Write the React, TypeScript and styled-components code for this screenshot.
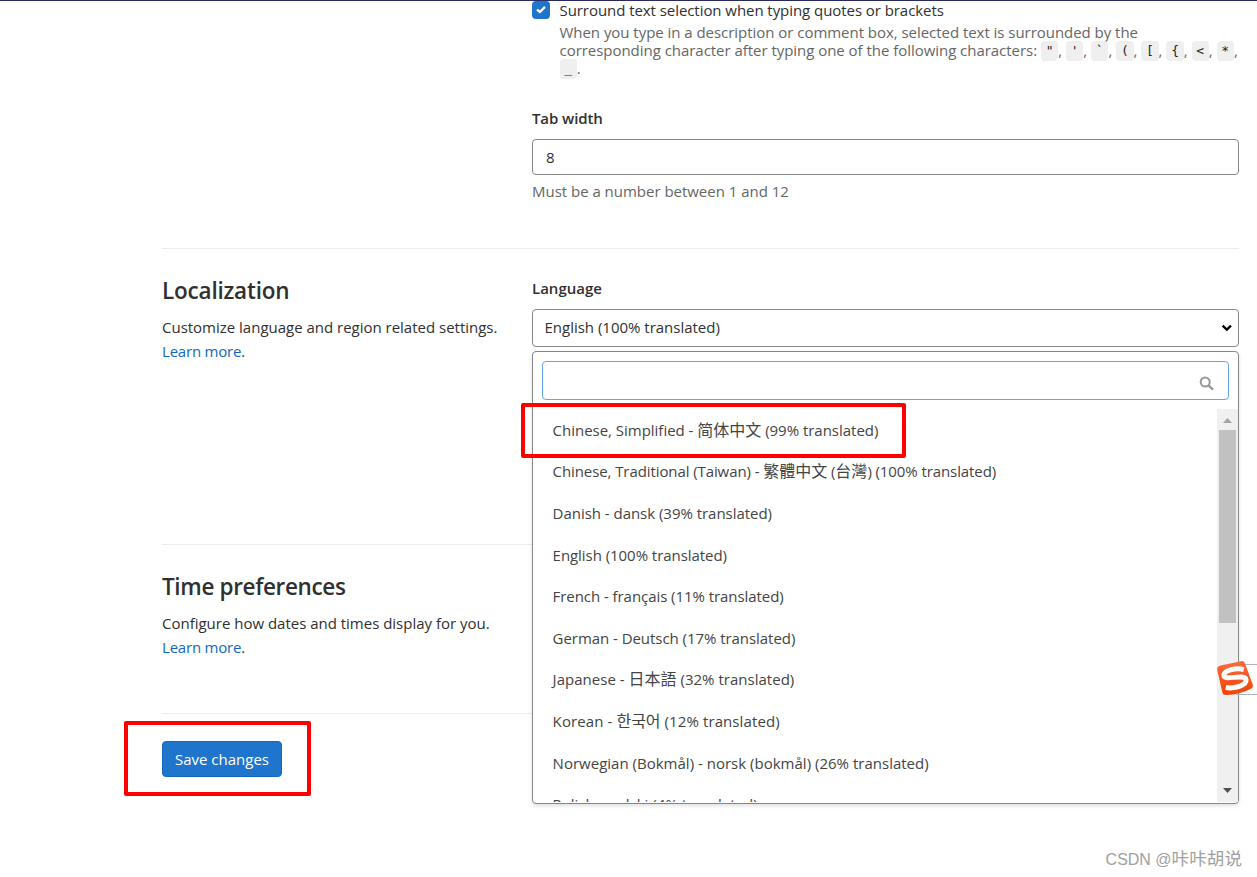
import React from "react";
import styled, { createGlobalStyle, css } from "styled-components";

const GlobalStyle = createGlobalStyle`
  * { box-sizing: border-box; }
  body {
    margin: 0;
    background: #fff;
    overflow: hidden;
    color: #303030;
    font-family: "Open Sans", "Noto Sans CJK SC", "Noto Sans CJK KR", sans-serif;
    font-size: 15px;
    line-height: 24px;
  }
`;

const Page = styled.div`
  position: relative;
  width: 1257px;
  height: 877px;
  overflow: hidden;
  border-top: 1px solid #292961;
`;

const Form = styled.form`
  margin: 0 18px 0 162px;
`;

const Section = styled.section<{ $height: number; $top?: number }>`
  display: grid;
  grid-template-columns: 370px 707px;
  height: ${(p) => p.$height}px;
  padding-top: ${(p) => p.$top ?? 0}px;
  border-bottom: 1px solid #ececec;
`;

const Heading = styled.h4<{ $spacing: number }>`
  margin: 0 0 9px;
  font-size: 22.5px;
  font-weight: 600;
  line-height: 30px;
  letter-spacing: ${(p) => p.$spacing}px;
`;

const Text = styled.p`
  margin: 0;
  white-space: nowrap;
  letter-spacing: -0.01px;
`;

const Link = styled.a`
  color: #1068bf;
  letter-spacing: -0.2px;
`;

const CheckRow = styled.div`
  display: flex;
  gap: 9.5px;
`;

const CheckBox = styled.span`
  display: flex;
  flex: none;
  align-items: center;
  justify-content: center;
  width: 18px;
  height: 18px;
  border-radius: 4px;
  background: #1f75cb;
`;

const CheckLabel = styled.label`
  display: block;
  height: 22px;
  line-height: 19px;
  letter-spacing: -0.06px;
  white-space: nowrap;
`;

const Help = styled.div`
  height: 55.5px;
  color: #666;
  line-height: 18.5px;
  white-space: nowrap;
`;

const HelpLine = styled.div<{ $height?: number }>`
  height: ${(p) => p.$height ?? 18.5}px;
  letter-spacing: -0.037px;
`;

const Hint = styled.div`
  padding-top: 2px;
  color: #666;
  letter-spacing: -0.02px;
`;

const Code = styled.code`
  display: inline-block;
  width: 17.3px;
  height: 20px;
  margin: -1px 0 1px;
  border-radius: 4px;
  background: #efefef;
  color: #1f1f1f;
  font: 13px/20px "DejaVu Sans Mono", monospace;
  letter-spacing: 0;
  text-align: center;
  vertical-align: middle;
`;

const Separator = styled.span`
  display: inline-block;
  width: 7.8px;
  letter-spacing: 0;
`;

const Label = styled.label<{ $top?: number; $spacing?: number }>`
  display: block;
  margin-top: ${(p) => p.$top ?? 0}px;
  font-weight: 600;
  letter-spacing: ${(p) => p.$spacing ?? 0}px;
`;

const field = css`
  display: flex;
  align-items: center;
  border: 1px solid #868686;
  border-radius: 4px;
  background: #fff;
`;

const TextField = styled.div`
  ${field}
  height: 36px;
  margin: 9px 0 2px;
  padding: 0 13px;
`;

const Select = styled.div`
  ${field}
  position: relative;
  justify-content: space-between;
  height: 38px;
  margin-top: 9px;
  padding: 0 6px 2px 11.5px;
`;

const Chevron = styled.svg`
  display: block;
  margin-top: 2px;
`;

const Dropdown = styled.div`
  position: absolute;
  top: 41px;
  left: -1px;
  z-index: 2;
  display: flex;
  flex-direction: column;
  width: 707px;
  height: 453px;
  padding: 9px 0 1px 9px;
  border: 1px solid #868686;
  border-radius: 4px;
  background: #fff;
  box-shadow: 0 2px 4px rgba(0, 0, 0, 0.12);
`;

const Search = styled.div`
  ${field}
  flex: none;
  justify-content: flex-end;
  width: 687px;
  height: 39px;
  padding: 7px 13px 0 0;
  border-color: #63a6e9;
`;

const Results = styled.div`
  display: flex;
  justify-content: space-between;
  height: 393px;
  margin-top: 9px;
  overflow: hidden;
`;

const Options = styled.ul`
  margin: 0;
  padding: 0 0 0 10.6px;
  list-style: none;
`;

const Option = styled.li<{ $spacing: number }>`
  height: 41.6px;
  padding-top: 8.8px;
  color: #444;
  white-space: nowrap;
  letter-spacing: ${(p) => p.$spacing}px;
`;

const Native = styled.span`
  font-size: 16px;
  line-height: 1;
  letter-spacing: 0;
`;

const Scrollbar = styled.div`
  display: flex;
  flex-direction: column;
  align-items: center;
  justify-content: space-between;
  width: 21px;
  padding: 9px 0;
  background: #f0f0f0;
`;

const Thumb = styled.div`
  width: 17px;
  height: 193px;
  margin: 7px 0 auto;
  background: #c1c1c1;
`;

const SaveButton = styled.button`
  display: block;
  width: 120px;
  height: 36px;
  margin-top: 27px;
  padding: 0 0 1px;
  border: 1px solid #1068bf;
  border-radius: 4px;
  background: #1f75cb;
  color: #fff;
  font: inherit;
  white-space: nowrap;
`;

const Highlight = styled.div<{ $x: number; $y: number; $w: number; $h: number }>`
  position: absolute;
  z-index: 3;
  left: ${(p) => p.$x}px;
  top: ${(p) => p.$y}px;
  width: ${(p) => p.$w}px;
  height: ${(p) => p.$h}px;
  border: 4px solid #fe0000;
  border-radius: 2px;
`;

const InputMethod = styled.div`
  position: absolute;
  z-index: 4;
  right: 0;
  top: 658px;
  width: 41px;
  height: 36px;
  svg { display: block; }
`;

const Watermark = styled.div`
  position: absolute;
  right: 15px;
  bottom: 5px;
  color: #a0a0a0;
  font: 16px/24px "Liberation Sans", "Noto Sans CJK SC", sans-serif;
  white-space: nowrap;
`;

const Author = styled.span`
  font-size: 17.6px;
  line-height: 1;
`;

const characters = ['"', "'", "`", "(", "[", "{", "<", "*"];

const languages: [string, number][] = [
  ["Chinese, Simplified - 简体中文 (99% translated)", -0.02],
  ["Chinese, Traditional (Taiwan) - 繁體中文 (台灣) (100% translated)", -0.09],
  ["Danish - dansk (39% translated)", -0.03],
  ["English (100% translated)", -0.05],
  ["French - français (11% translated)", -0.06],
  ["German - Deutsch (17% translated)", -0.05],
  ["Japanese - 日本語 (32% translated)", 0.02],
  ["Korean - 한국어 (12% translated)", 0.1],
  ["Norwegian (Bokmål) - norsk (bokmål) (26% translated)", 0.01],
  ["Polish - polski (4% translated)", 0.03],
];

function LanguageName({ name }: { name: string }) {
  return (
    <>
      {name.split(/([\u3000-\u9fff\uac00-\ud7af]+)/).map((part, i) =>
        i % 2 ? <Native key={i}>{part}</Native> : part
      )}
    </>
  );
}

export default function App() {
  return (
    <>
      <GlobalStyle />
      <Page>
        <Form>
          <Section $height={248}>
            <div />
            <div>
              <CheckRow>
                <CheckBox>
                  <svg width="10" height="8" viewBox="0 0 10 8" fill="none">
                    <path d="M1 3.600 3.900 6 9 .9" stroke="#fff" strokeWidth="2.300" />
                  </svg>
                </CheckBox>
                <div>
                  <CheckLabel>Surround text selection when typing quotes or brackets</CheckLabel>
                  <Help>
                    <HelpLine $height={17.6}>When you type in a description or comment box, selected text is surrounded by the</HelpLine>
                    <HelpLine>
                      corresponding character after typing one of the following characters:{" "}
                      {characters.map((c) => (
                        <React.Fragment key={c}>
                          <Code>{c}</Code>
                          <Separator>,</Separator>
                        </React.Fragment>
                      ))}
                    </HelpLine>
                    <HelpLine>
                      <Code>_</Code>.
                    </HelpLine>
                  </Help>
                </div>
              </CheckRow>
              <Label $top={27} $spacing={-0.1}>Tab width</Label>
              <TextField>8</TextField>
              <Hint>Must be a number between 1 and 12</Hint>
            </div>
          </Section>
          <Section $height={296} $top={27}>
            <div>
              <Heading $spacing={-0.2}>Localization</Heading>
              <Text>Customize language and region related settings.</Text>
              <Text><Link>Learn more</Link>.</Text>
            </div>
            <div>
              <Label>Language</Label>
              <Select>
                <Text>English (100% translated)</Text>
                <Chevron width="11" height="8" viewBox="0 0 11 8" fill="none">
                  <path d="M1.6 1.7 5.8 5.6 10 1.7" stroke="#000" strokeWidth="2.3" />
                </Chevron>
                <Dropdown>
                  <Search>
                    <svg width="16" height="16" viewBox="0 0 16 16" fill="none" stroke="#999">
                      <circle cx="6.2" cy="6" r="4.5" strokeWidth="2" />
                      <path d="m9.5 9.3 4.5 4.3" strokeWidth="2.5" />
                    </svg>
                  </Search>
                  <Results>
                    <Options>
                      {languages.map(([name, spacing]) => (
                        <Option key={name} $spacing={spacing}><LanguageName name={name} /></Option>
                      ))}
                    </Options>
                    <Scrollbar>
                      <svg width="9" height="5"><path d="M0 5 4.5 0 9 5Z" fill="#a3a3a3" /></svg>
                      <Thumb />
                      <svg width="9" height="5"><path d="M0 0 4.5 5 9 0Z" fill="#505050" /></svg>
                    </Scrollbar>
                  </Results>
                </Dropdown>
              </Select>
            </div>
          </Section>
          <Section $height={169} $top={27}>
            <div>
              <Heading $spacing={-0.35}>Time preferences</Heading>
              <Text>Configure how dates and times display for you.</Text>
              <Text><Link>Learn more</Link>.</Text>
            </div>
          </Section>
          <SaveButton type="button">Save changes</SaveButton>
        </Form>
        <Highlight $x={520.5} $y={401.5} $w={385} $h={55} />
        <Highlight $x={124} $y={719.5} $w={187} $h={75} />
        <InputMethod>
          <svg width="41" height="36" viewBox="0 0 41 36">
            <defs>
              <linearGradient id="orange" x1="0" y1="0" x2="0" y2="1">
                <stop offset="0" stopColor="#fb6a3a" />
                <stop offset="1" stopColor="#f04405" />
              </linearGradient>
            </defs>
            <path d="M20 5.500H42V35.500H20" fill="none" stroke="#b4b4be" />
            <path d="M4.500 6.500 25 2.200Q28 1.500 29 4.500L36.700 25.500Q37.500 28.500 34.500 30 24 35.500 10 36 7 36 6.400 33.500L1.200 11Q.6 7.500 4.500 6.500Z" fill="url(#orange)" />
            <path d="M27.800 10.600C20 8.500 7 11.500 8 17 9 21.800 28.500 14.500 30 20.500 31 26.500 18 30 9.800 28.500" fill="none" stroke="#fff" strokeWidth="5" />
          </svg>
        </InputMethod>
        <Watermark>CSDN @<Author>咔咔胡说</Author></Watermark>
      </Page>
    </>
  );
}
